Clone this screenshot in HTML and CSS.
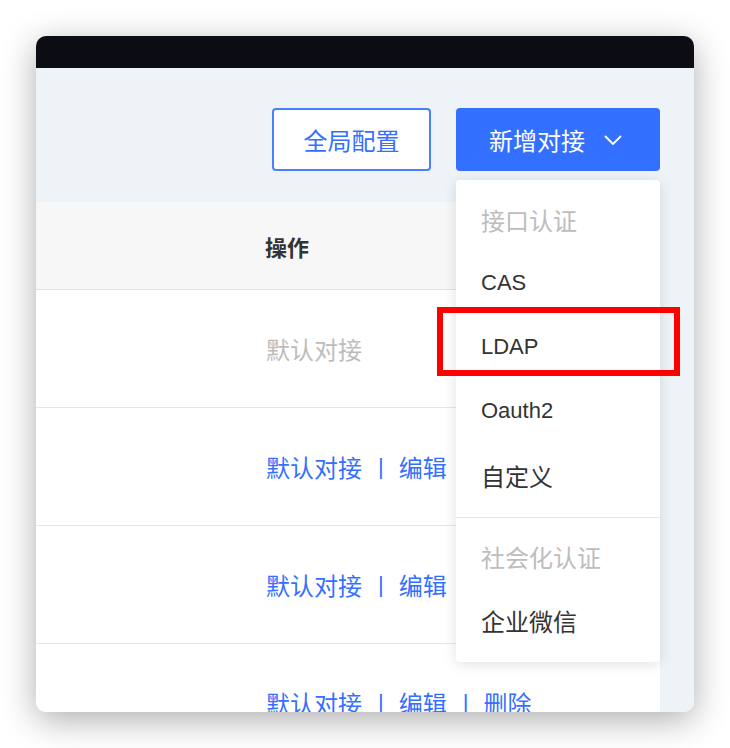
FILE: index.html
```html
<!DOCTYPE html>
<html lang="zh-CN">
<head>
<meta charset="utf-8">
<title>对接配置</title>
<link rel="stylesheet" href="styles.css">
</head>
<body>
<div class="window">
  <div class="titlebar"></div>
  <div class="content">
    <div class="toolbar">
      <button class="btn btn-outline">全局配置</button>
      <div class="dd-wrap">
        <button class="btn btn-primary">新增对接
          <svg class="chev" width="18" height="11" viewBox="0 0 18 11"><path d="M1.5 1.5 L9 9 L16.5 1.5" fill="none" stroke="#fff" stroke-width="1.8" stroke-linecap="round" stroke-linejoin="round"/></svg>
        </button>
        <div class="dropdown">
          <div class="dd-title">接口认证</div>
          <div class="dd-item latin">CAS</div>
          <div class="dd-item latin">LDAP</div>
          <div class="dd-item latin">Oauth2</div>
          <div class="dd-item">自定义</div>
          <div class="dd-divider"></div>
          <div class="dd-title">社会化认证</div>
          <div class="dd-item">企业微信</div>
          <div class="highlight"></div>
        </div>
      </div>
    </div>
    <div class="table">
      <div class="thead">
        <div class="cell"></div>
        <div class="cell ops">操作</div>
      </div>
      <div class="row">
        <div class="cell"></div>
        <div class="cell ops"><span class="muted">默认对接</span></div>
      </div>
      <div class="row">
        <div class="cell"></div>
        <div class="cell ops"><span class="link">默认对接</span><span class="sep">|</span><span class="link">编辑</span></div>
      </div>
      <div class="row">
        <div class="cell"></div>
        <div class="cell ops"><span class="link">默认对接</span><span class="sep">|</span><span class="link">编辑</span></div>
      </div>
      <div class="row">
        <div class="cell"></div>
        <div class="cell ops"><span class="link">默认对接</span><span class="sep">|</span><span class="link">编辑</span><span class="sep">|</span><span class="link">删除</span></div>
      </div>
    </div>
  </div>
</div>
</body>
</html>
```

FILE: styles.css
```css
* { box-sizing: border-box; }
html, body { margin: 0; background: #ffffff; }
body {
  padding: 36px;
  font-family: "Liberation Sans", "Noto Sans CJK SC", sans-serif;
}
.window {
  width: 658px;
  height: 676px;
  border-radius: 10px;
  overflow: hidden;
  box-shadow: 0 8px 34px rgba(0, 0, 0, 0.32);
  display: flex;
  flex-direction: column;
}
.titlebar {
  height: 32px;
  background: #0b0c14;
  flex: none;
}
.content {
  flex: 1;
  background: #eef3f8;
  overflow: hidden;
}
.toolbar {
  display: flex;
  justify-content: flex-end;
  gap: 25px;
  padding: 40px 34px 0 0;
  position: relative;
  z-index: 2;
}
.btn {
  height: 63px;
  border-radius: 4px;
  font-family: "Noto Sans CJK SC", sans-serif;
  font-size: 24px;
  display: flex;
  align-items: center;
  cursor: pointer;
  margin: 0;
}
.btn-outline {
  width: 159px;
  justify-content: center;
  background: #ffffff;
  color: #3370ff;
  border: 2px solid #4a80ff;
}
.btn-primary {
  width: 204px;
  padding: 0 0 0 33px;
  background: #3370ff;
  color: #ffffff;
  border: none;
}
.chev { margin-left: 19px; margin-top: 1px; }
.dd-wrap { position: relative; }
.dropdown {
  position: absolute;
  top: 72px;
  left: 0;
  width: 204px;
  background: #ffffff;
  border-radius: 4px;
  box-shadow: 0 2px 14px rgba(0, 0, 0, 0.12);
  padding: 7px 0 10px;
}
.dd-title, .dd-item {
  height: 64px;
  display: flex;
  align-items: center;
  padding-left: 25px;
  font-family: "Noto Sans CJK SC", sans-serif;
  font-size: 24px;
}
.dd-title { color: #bdbdbd; }
.dd-item { color: #333333; }
.dd-item.latin {
  font-family: "Liberation Sans", sans-serif;
  font-size: 22px;
}
.dd-divider {
  height: 1px;
  background: #e6e6e6;
  margin: 10px 0 6px;
}
.highlight {
  position: absolute;
  left: -19px;
  top: 127px;
  width: 243px;
  height: 69px;
  border: 6px solid #ff0000;
}
.table {
  margin: 31px 34px 0 0;
  background: #ffffff;
  font-family: "Noto Sans CJK SC", sans-serif;
  font-size: 24px;
}
.thead, .row {
  display: grid;
  grid-template-columns: 206px 1fr;
}
.thead {
  height: 88px;
  background: #f7f7f7;
  border-bottom: 1px solid #e2e2e2;
}
.row {
  height: 118px;
  border-bottom: 1px solid #e6e6e6;
}
.cell {
  display: flex;
  align-items: center;
}
.ops { padding-left: 24px; }
.thead .ops { color: #333333; font-weight: 700; font-size: 22px; padding-left: 23px; }
.muted { color: #bcbcbc; }
.link { color: #3370ff; }
.sep {
  color: #3370ff;
  font-family: "Liberation Sans", sans-serif;
  font-size: 22px;
  margin: 0 15px 0 16px;
}
```
